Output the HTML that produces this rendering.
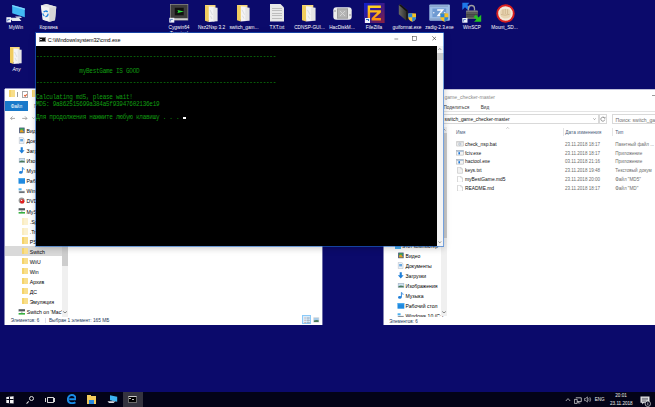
<!DOCTYPE html>
<html><head><meta charset="utf-8">
<style>
*{margin:0;padding:0;box-sizing:border-box}
html,body{width:655px;height:407px;overflow:hidden}
body{background:#0b0a6b;position:relative;font-family:"Liberation Sans",sans-serif;font-size:4.8px;color:#000}
.a{position:absolute}
.lbl{position:absolute;color:#fff;font-size:4.75px;white-space:nowrap;text-align:center;line-height:6px}
.t{position:absolute;white-space:nowrap;line-height:6px;font-size:4.8px}
.fold{position:absolute;background:#f3d36b}
.fold:after{content:"";position:absolute;left:25%;top:8%;right:4%;bottom:0;background:#f4f4f4;transform:skewY(-8deg)}
pre{margin:0}
</style></head><body>
<svg class="a" style="left:0;top:0" width="30" height="25" viewBox="0 0 30 25"><path d="M12.2,4.9 L24.8,8.6 V17.2 L12.2,13.2 Z" fill="#41b9f4"/><path d="M12.2,4.9 L24.8,8.6 V10 L12.2,6.3 Z" fill="#7fd4fb"/><path d="M15.2,16.4 L20.5,16.6 L22,17.9 L16.5,17.8 Z" fill="#dfe6ec"/><path d="M9.7,17.8 L19,17.8 L21.4,20.9 L12.2,20.9 Z" fill="#e4e8ec"/><rect x="6.4" y="17.2" width="4.6" height="5.2" fill="#f2f5fa"/><path d="M7.8,21.3 V19.4 H9.8" stroke="#2a5ab0" stroke-width="0.8" fill="none"/></svg>
<div class="lbl" style="left:-4.0px;top:25.0px;width:40px;">MyWin</div>
<svg class="a" style="left:36px;top:0" width="24" height="24" viewBox="0 0 24 24"><path d="M4.9,5.5 L10.4,4 L20.3,6.8 L19,20.3 L13.5,21.8 L6.8,19.7 Z" fill="#e0e0e0"/><path d="M4.9,5.5 L10.4,4 L20.3,6.8 L13.5,7.8 Z" fill="#e4e4e4"/><path d="M4.9,5.5 L13.5,7.8 V21.8 L6.8,19.7 Z" fill="#f2f2f2"/><path d="M13.5,7.8 L20.3,6.8 L19,20.3 L13.5,21.8 Z" fill="#d6d6d6"/><path d="M7.6,12.2 A2.4,2.4 0 0 1 11.6,12 M11.9,13.6 A2.4,2.4 0 0 1 9.4,16.6 M8.4,16 A2.4,2.4 0 0 1 7,13.4" stroke="#1c80dc" stroke-width="1.3" fill="none"/></svg>
<div class="lbl" style="left:28.5px;top:25.0px;width:40px;">Корзина</div>
<svg class="a" style="left:10px;top:47px;" width="12" height="17" viewBox="0 0 13 17" preserveAspectRatio="none"><path d="M0,0 H10.5 V15 H0 Z" fill="#f7d87c"/><path d="M0,0.2 L3.8,1.4 V17 L0,15.8 Z" fill="#f0cc5e"/><path d="M3.8,1.4 L9.5,1.8 V16.6 L3.8,17 Z" fill="#f4f4f4"/><path d="M8.3,2.4 L12.6,2.8 V16.2 L8.3,16.6 Z" fill="#e6e6e6"/><path d="M5,5 L7.5,10 M5.5,11 L7,14" stroke="#c8ccd4" stroke-width="0.6"/></svg>
<div class="lbl" style="left:-3.5px;top:67.2px;width:40px;font-style:italic">Any</div>
<svg class="a" style="left:165px;top:0" width="30" height="25" viewBox="0 0 30 25"><rect x="5" y="4" width="18.2" height="16.5" fill="#9a9a9a"/><rect x="5.6" y="4.6" width="17" height="13.8" fill="#3c3c3c"/><rect x="5.6" y="18.4" width="17" height="1.6" fill="#cfcfcf"/><rect x="9.3" y="7.3" width="9.8" height="8.5" rx="0.6" fill="#101010" stroke="#555" stroke-width="0.5"/><path d="M12.3,10 L19,11.4 L12.3,13 L13.3,11.4 Z" fill="#2ee040"/><rect x="4.3" y="17.8" width="5" height="4.8" fill="#eef2fa"/><path d="M5.6,21.5 V19.4 H7.8" stroke="#2a5ab0" stroke-width="0.7" fill="none"/></svg>
<div class="lbl" style="left:159.0px;top:25.2px;width:40px;">Cygwin64</div>
<div class="lbl" style="left:159.0px;top:30.999999999999996px;width:40px;">Terminal</div>
<svg class="a" style="left:205px;top:5px;" width="13" height="17" viewBox="0 0 13 17" preserveAspectRatio="none"><path d="M0,0 H10.5 V15 H0 Z" fill="#f7d87c"/><path d="M0,0.2 L3.8,1.4 V17 L0,15.8 Z" fill="#f0cc5e"/><path d="M3.8,1.4 L9.5,1.8 V16.6 L3.8,17 Z" fill="#f4f4f4"/><path d="M8.3,2.4 L12.6,2.8 V16.2 L8.3,16.6 Z" fill="#e6e6e6"/><path d="M5,5 L7.5,10 M5.5,11 L7,14" stroke="#c8ccd4" stroke-width="0.6"/></svg>
<div class="lbl" style="left:191.5px;top:25.2px;width:40px;">Nsz2Nsp 3.2</div>
<svg class="a" style="left:237px;top:5px;" width="13" height="16.5" viewBox="0 0 13 17" preserveAspectRatio="none"><path d="M0,0 H10.5 V15 H0 Z" fill="#f7d87c"/><path d="M0,0.2 L3.8,1.4 V17 L0,15.8 Z" fill="#f0cc5e"/><path d="M3.8,1.4 L9.5,1.8 V16.6 L3.8,17 Z" fill="#f4f4f4"/><path d="M8.3,2.4 L12.6,2.8 V16.2 L8.3,16.6 Z" fill="#e6e6e6"/><path d="M5,5 L7.5,10 M5.5,11 L7,14" stroke="#c8ccd4" stroke-width="0.6"/></svg>
<div class="lbl" style="left:224.0px;top:25.2px;width:40px;">switch_gam...</div>
<div class="a" style="left:270px;top:4px;width:14px;height:17.5px;background:#e8e8e8;clip-path:polygon(0 0,75% 0,100% 20%,100% 100%,0 100%)"></div>
<div class="a" style="left:272px;top:8px;width:10px;height:11px;background:repeating-linear-gradient(#bdbdbd 0 1px,transparent 1px 2.4px)"></div>
<div class="lbl" style="left:257.0px;top:25.2px;width:40px;">TXT.txt</div>
<svg class="a" style="left:302px;top:5px;" width="14" height="16.5" viewBox="0 0 13 17" preserveAspectRatio="none"><path d="M0,0 H10.5 V15 H0 Z" fill="#f7d87c"/><path d="M0,0.2 L3.8,1.4 V17 L0,15.8 Z" fill="#f0cc5e"/><path d="M3.8,1.4 L9.5,1.8 V16.6 L3.8,17 Z" fill="#f4f4f4"/><path d="M8.3,2.4 L12.6,2.8 V16.2 L8.3,16.6 Z" fill="#e6e6e6"/><path d="M5,5 L7.5,10 M5.5,11 L7,14" stroke="#c8ccd4" stroke-width="0.6"/></svg>
<div class="lbl" style="left:289.5px;top:25.2px;width:40px;">CDNSP-GUI...</div>
<svg class="a" style="left:332.5px;top:6.5px" width="19" height="13" viewBox="0 0 19 13"><rect x="0.3" y="0.3" width="18.4" height="12.4" rx="3" fill="#ececec"/><rect x="4" y="1.3" width="11" height="10.4" fill="#9c9c9c"/><rect x="5" y="2.3" width="9" height="8.4" fill="#b4b4b4"/><path d="M7,4 L12,9 M12,4 L7,9" stroke="#d8d8d8" stroke-width="0.9"/><circle cx="2" cy="4" r="0.7" fill="#777"/><circle cx="17" cy="8" r="0.7" fill="#777"/></svg>
<div class="lbl" style="left:322.0px;top:25.2px;width:40px;">HacDiskM...</div>
<svg class="a" style="left:364.3px;top:2.8px" width="20.6" height="20" viewBox="0 0 20.6 20"><defs><linearGradient id="fzb" x1="0" y1="0" x2="1" y2="1"><stop offset="0" stop-color="#1020d0"/><stop offset=".5" stop-color="#3a1a8a"/><stop offset="1" stop-color="#8a2040"/></linearGradient><linearGradient id="fzl" x1="0" y1="0" x2="0" y2="1"><stop offset="0" stop-color="#ffd820"/><stop offset="1" stop-color="#ff8a10"/></linearGradient></defs><rect width="20.6" height="20" fill="url(#fzb)"/><path d="M3.7,2.5 H16.9 V4.9 H6.1 V7.3 H16.9 V9.5 L10.8,15 H16.9 V17.5 H7.6 V15.2 L13.3,9.5 H6.1 V15.2 H3.7 Z" fill="url(#fzl)"/></svg>
<div class="a" style="left:364.6px;top:17.5px;width:5.2px;height:5.2px;background:#eef2fa"></div>
<div class="a" style="left:366px;top:18.8px;width:2.5px;height:2.5px;border-top:0.8px solid #2a6ac0;border-right:0.8px solid #2a6ac0"></div>
<div class="lbl" style="left:354.0px;top:25.2px;width:40px;">FileZilla</div>
<svg class="a" style="left:398px;top:3.5px" width="19" height="19" viewBox="0 0 19 19"><defs><linearGradient id="gdr" x1="0" x2="1"><stop offset="0" stop-color="#6a6a62"/><stop offset="1" stop-color="#262624"/></linearGradient></defs><path d="M0.8,1.1 L2.7,0.5 L9.8,6.6 V15.5 L8.2,16.5 L0.8,10.3 Z" fill="url(#gdr)"/><path d="M0.8,1.1 L2.7,0.5 L9.8,6.6 L8.2,7.3 Z" fill="#111"/><path d="M8.2,7.3 L9.8,6.6 V15.5 L8.2,16.5 Z" fill="#1a1a1a"/></svg>
<svg class="a" style="left:407.8px;top:13px" width="8.5" height="9" viewBox="0 0 8.5 9"><path d="M0.3,0.6 Q4.25,-0.2 8.2,0.6 V4.5 Q8,7.6 4.25,8.8 Q0.5,7.6 0.3,4.5 Z" fill="#f5c024"/><path d="M0.3,0.6 Q2.2,0.25 4.25,0.2 V4.3 H0.3 Z M4.25,4.3 H8.15 Q8,7.6 4.25,8.8 Z" fill="#2a86dc"/></svg>
<div class="lbl" style="left:387.0px;top:25.2px;width:40px;">guiformat.exe</div>
<svg class="a" style="left:429px;top:3.5px" width="21.5" height="17.5" viewBox="0 0 21.5 17.5"><rect x="0.3" y="0.5" width="20.6" height="16.3" rx="1" fill="#9cbde6"/><path d="M2,1.3 V3 M4,1.3 V3 M6,1.3 V3 M8,1.3 V3 M10,1.3 V3 M12,1.3 V3 M14,1.3 V3 M16,1.3 V3 M18,1.3 V3 M2,14.3 V16 M4,14.3 V16 M6,14.3 V16 M8,14.3 V16 M10,14.3 V16 M12,14.3 V16 M14,14.3 V16 M16,14.3 V16 M18,14.3 V16" stroke="#6a7ea0" stroke-width="0.7"/><rect x="3.4" y="4.5" width="13.8" height="8.6" fill="#6f9ad2"/><path d="M8.2,6 H13.6 L9.2,11.4 H13.8" stroke="#fff" stroke-width="1.5" fill="none"/><circle cx="4.8" cy="8.8" r="0.7" fill="#fff"/><circle cx="15.8" cy="8.8" r="0.7" fill="#fff"/></svg>
<svg class="a" style="left:440.4px;top:13.3px" width="8.8" height="9" viewBox="0 0 8.5 9"><path d="M0.3,0.6 Q4.25,-0.2 8.2,0.6 V4.5 Q8,7.6 4.25,8.8 Q0.5,7.6 0.3,4.5 Z" fill="#f5c024"/><path d="M0.3,0.6 Q2.2,0.25 4.25,0.2 V4.3 H0.3 Z M4.25,4.3 H8.15 Q8,7.6 4.25,8.8 Z" fill="#2a86dc"/></svg>
<div class="lbl" style="left:419.5px;top:24.7px;width:40px;">zadig-2.3.exe</div>
<svg class="a" style="left:458px;top:0" width="26" height="24" viewBox="0 0 26 24"><defs><linearGradient id="wsl" x1="0" x2="0" y1="0" y2="1"><stop offset="0" stop-color="#8a8a8a"/><stop offset=".5" stop-color="#4a4a4a"/><stop offset="1" stop-color="#6a6a6a"/></linearGradient></defs><path d="M4.3,2.8 H11.4 L9.2,5 L12,7.8 L9.8,10 L7,7.2 L4.3,9.9 Z" fill="#1e78e8"/><path d="M10.5,10.6 V8.5 A3,3 0 0 1 16.5,8.5 V10.6" stroke="#a0a0a0" stroke-width="1.3" fill="none"/><rect x="8" y="10.4" width="11.9" height="8.5" rx="0.8" fill="url(#wsl)"/><path d="M8.5,12.5 H19.5 M8.5,14.5 H19.5 M8.5,16.5 H19.5" stroke="#3a3a3a" stroke-width="0.4"/><path d="M23.2,21.8 H16 L18.3,19.6 L15.6,16.9 L17.8,14.7 L20.5,17.4 L23.2,14.7 Z" fill="#22c022"/><rect x="4.3" y="18" width="5.2" height="4.7" fill="#eef2fa"/><path d="M5.6,21.6 V19.5 H7.8" stroke="#2a5ab0" stroke-width="0.7" fill="none"/></svg>
<div class="lbl" style="left:452.0px;top:24.7px;width:40px;">WinSCP</div>
<svg class="a" style="left:495.5px;top:3.5px" width="19" height="19" viewBox="0 0 19 19"><circle cx="9.5" cy="9.5" r="8.3" fill="#f2e8d8" stroke="#d82020" stroke-width="1.9"/><path d="M4.2,8 Q4.5,5 7,5.2 Q9,4.2 11,5 Q13.5,4.8 14.5,7 Q15.2,10.5 14,13 Q11.5,15 8,14.5 Q5,14 4.2,11 Z" fill="#e8d4b0"/><path d="M7,5.5 V10 M9.3,5 V10 M11.6,5.3 V10 M5,10.5 Q9,12 13.5,10.3" stroke="#b89a70" stroke-width="0.5" fill="none"/></svg>
<div class="lbl" style="left:484.5px;top:24.7px;width:40px;">Mount_SD...</div>
<div class="a" style="left:5px;top:89px;width:317px;height:236px;background:#fff"></div>
<div class="a" style="left:5px;top:88px;width:317px;height:1px;background:rgba(255,255,255,.55)"></div>
<div class="a" style="left:4px;top:89px;width:1px;height:236px;background:rgba(255,255,255,.5)"></div>
<div class="a" style="left:322px;top:89px;width:1px;height:236px;background:rgba(255,255,255,.4)"></div>
<div class="a" style="left:9px;top:90.4px;width:5.6px;height:6.6px;background:linear-gradient(90deg,#f5d36a 0 30%,#f8de8a 30%);border-radius:.3px"></div>
<div class="a" style="left:17.3px;top:92px;width:0.6px;height:5px;background:#9a9a9a"></div>
<div class="a" style="left:22.4px;top:91.4px;width:5.4px;height:6.7px;background:#fff;border:0.6px solid #a8a8a8"></div>
<div class="a" style="left:23.5px;top:93.5px;width:3px;height:2px;border-left:0.8px solid #e05a2a;border-bottom:0.8px solid #e05a2a;transform:rotate(-45deg)"></div>
<div class="a" style="left:31.6px;top:90.4px;width:5.6px;height:6.6px;background:linear-gradient(90deg,#f5d36a 0 30%,#f8de8a 30%);border-radius:.3px"></div>
<div class="a" style="left:4.5px;top:101px;width:23.3px;height:9.6px;background:#1979ca"></div>
<div class="t" style="left:10.7px;top:103.8px;color:#fff;font-size:4.7px">Файл</div>
<div class="t" style="left:34px;top:103.8px;color:#555;font-size:4.7px">Г</div>
<svg class="a" style="left:9.6px;top:115.6px" width="5.6" height="4.8" viewBox="0 0 5.6 4.8"><path d="M5.4,2.4 H0.6 M2.6,0.4 L0.6,2.4 L2.6,4.4" stroke="#8a8a8a" stroke-width="0.7" fill="none"/></svg>
<svg class="a" style="left:22px;top:115.6px" width="5.6" height="4.8" viewBox="0 0 5.6 4.8"><path d="M0.2,2.4 H5 M3,0.4 L5,2.4 L3,4.4" stroke="#8a8a8a" stroke-width="0.7" fill="none"/></svg>
<svg class="a" style="left:32.4px;top:116.94999999999999px" width="3.2" height="2.1" viewBox="0 0 3.2 2.1"><path d="M0.4,0.4 L1.6,1.7000000000000002 L2.8,0.4" stroke="#8a8a8a" stroke-width="0.6" fill="none"/></svg>
<div class="a" style="left:5px;top:246.2px;width:56.5px;height:9.4px;background:#d9d9d9"></div>
<svg class="a" style="left:17.7px;top:126.80000000000001px" width="7.5" height="7" viewBox="0 0 7.5 7"><rect x="1.2" y="0.6" width="5.4" height="5.6" fill="#3a4868"/><rect x="2" y="1.4" width="3.8" height="4" fill="#2a7ad0"/><path d="M2,1.4 H5.8 V3 H2 Z" fill="#40a848"/><path d="M2,3.6 L4,2.6 L5.8,4.4 V5.4 H2 Z" fill="#e0a020"/></svg>
<div class="t" style="left:26.5px;top:128.10000000000002px;font-size:5.2px">Видео</div>
<svg class="a" style="left:17.7px;top:136.8px" width="7.5" height="7" viewBox="0 0 7.5 7"><path d="M1.3,0.3 H4.6 L6,1.7 V6.6 H1.3 Z" fill="#eef2f6" stroke="#a8b4c4" stroke-width="0.5"/><rect x="2.2" y="2" width="2.8" height="2.4" fill="#6aa8e0"/></svg>
<div class="t" style="left:26.5px;top:138.10000000000002px;font-size:5.2px">Документы</div>
<svg class="a" style="left:17.7px;top:146.7px" width="7.5" height="7" viewBox="0 0 7.5 7"><path d="M2.7,0.2 H4.8 V3.2 H6.6 L3.75,6.6 L0.9,3.2 H2.7 Z" fill="#1f7fd8"/></svg>
<div class="t" style="left:26.5px;top:148.0px;font-size:5.2px">Загрузки</div>
<svg class="a" style="left:17.7px;top:156.7px" width="7.5" height="7" viewBox="0 0 7.5 7"><rect x="0.9" y="1.2" width="6.2" height="4.6" fill="#9aa8b8"/><rect x="1.4" y="1.7" width="5.2" height="3.6" fill="#cfe4f6"/><path d="M1.4,4.2 Q3.5,2.8 6.6,4 V5.3 H1.4 Z" fill="#4a7a58"/></svg>
<div class="t" style="left:26.5px;top:158.0px;font-size:5.2px">Изображения</div>
<svg class="a" style="left:17.7px;top:166.7px" width="7.5" height="7" viewBox="0 0 7.5 7"><path d="M4.4,0.4 V5.2" stroke="#1f7fd8" stroke-width="0.9"/><path d="M4.4,0.4 Q6.2,1.2 6.2,3" stroke="#1f7fd8" stroke-width="0.7" fill="none"/><ellipse cx="2.8" cy="5.4" rx="1.8" ry="1.3" fill="#1f7fd8"/></svg>
<div class="t" style="left:26.5px;top:168.0px;font-size:5.2px">Музыка</div>
<svg class="a" style="left:17.7px;top:176.7px" width="7.5" height="7" viewBox="0 0 7.5 7"><rect x="0.5" y="1.2" width="6.8" height="5.5" fill="#1f8ae0"/><rect x="0.5" y="1.2" width="6.8" height="1" fill="#52aef0"/></svg>
<div class="t" style="left:26.5px;top:178.0px;font-size:5.2px">Рабочий стол</div>
<svg class="a" style="left:17.7px;top:186.7px" width="7.5" height="7" viewBox="0 0 7.5 7"><rect x="0.6" y="1.3" width="3" height="2" fill="#4ab0f0"/><rect x="0.6" y="3.8" width="6.4" height="2.4" fill="#c8ccd0"/><rect x="1.2" y="4.6" width="5.2" height="1" fill="#303840"/></svg>
<div class="t" style="left:26.5px;top:188.0px;font-size:5.2px">Windows 10 (C:)</div>
<svg class="a" style="left:17.7px;top:197.0px" width="7.5" height="7" viewBox="0 0 7.5 7"><circle cx="3.6" cy="3.4" r="3" fill="#9a9a9a"/><circle cx="4.2" cy="4.4" r="2.2" fill="#e02020"/><circle cx="3.6" cy="3.4" r="0.7" fill="#eee"/></svg>
<div class="t" style="left:26.5px;top:198.3px;font-size:5.2px">DVD</div>
<svg class="a" style="left:17.7px;top:207.2px" width="7.5" height="7" viewBox="0 0 7.5 7"><rect x="0.6" y="1.2" width="6.6" height="2.4" fill="#50585e"/><rect x="0.6" y="3.2" width="6.6" height="0.5" fill="#e8e8e8"/><path d="M3.9,3.7 V5" stroke="#50585e" stroke-width="0.6"/><rect x="0.6" y="5" width="6.6" height="1.6" fill="#36b040"/></svg>
<div class="t" style="left:26.5px;top:208.5px;font-size:5.2px">MySwitch</div>
<div class="a" style="left:22px;top:218.0px;width:5.6px;height:6.6px;background:linear-gradient(90deg,#faecc0 0 30%,#fbf1d0 30%);border-radius:.3px"></div>
<div class="t" style="left:29.7px;top:219.20000000000002px;font-size:5.2px">.Spotify</div>
<div class="a" style="left:22px;top:228.1px;width:5.6px;height:6.6px;background:linear-gradient(90deg,#faecc0 0 30%,#fbf1d0 30%);border-radius:.3px"></div>
<div class="t" style="left:29.7px;top:229.3px;font-size:5.2px">.Trash</div>
<div class="a" style="left:22px;top:237.29999999999998px;width:5.6px;height:6.6px;background:linear-gradient(90deg,#f5d36a 0 30%,#f8de8a 30%);border-radius:.3px"></div>
<div class="t" style="left:29.7px;top:238.5px;font-size:5.2px">PS3</div>
<div class="a" style="left:22px;top:247.9px;width:5.6px;height:6.6px;background:linear-gradient(90deg,#f5d36a 0 30%,#f8de8a 30%);border-radius:.3px"></div>
<div class="t" style="left:29.7px;top:249.10000000000002px;font-size:5.2px">Switch</div>
<div class="a" style="left:22px;top:257.7px;width:5.6px;height:6.6px;background:linear-gradient(90deg,#f5d36a 0 30%,#f8de8a 30%);border-radius:.3px"></div>
<div class="t" style="left:29.7px;top:258.90000000000003px;font-size:5.2px">WiiU</div>
<div class="a" style="left:22px;top:267.7px;width:5.6px;height:6.6px;background:linear-gradient(90deg,#f5d36a 0 30%,#f8de8a 30%);border-radius:.3px"></div>
<div class="t" style="left:29.7px;top:268.90000000000003px;font-size:5.2px">Win</div>
<div class="a" style="left:22px;top:277.7px;width:5.6px;height:6.6px;background:linear-gradient(90deg,#f5d36a 0 30%,#f8de8a 30%);border-radius:.3px"></div>
<div class="t" style="left:29.7px;top:278.90000000000003px;font-size:5.2px">Архив</div>
<div class="a" style="left:22px;top:287.7px;width:5.6px;height:6.6px;background:linear-gradient(90deg,#f5d36a 0 30%,#f8de8a 30%);border-radius:.3px"></div>
<div class="t" style="left:29.7px;top:288.90000000000003px;font-size:5.2px">ДС</div>
<div class="a" style="left:22px;top:297.7px;width:5.6px;height:6.6px;background:linear-gradient(90deg,#f5d36a 0 30%,#f8de8a 30%);border-radius:.3px"></div>
<div class="t" style="left:29.7px;top:298.90000000000003px;font-size:5.2px">Эмуляция</div>
<svg class="a" style="left:17.7px;top:308.0px" width="7.5" height="7" viewBox="0 0 7.5 7"><rect x="0.6" y="1.2" width="6.6" height="2.4" fill="#50585e"/><rect x="0.6" y="3.2" width="6.6" height="0.5" fill="#e8e8e8"/><path d="M3.9,3.7 V5" stroke="#50585e" stroke-width="0.6"/><rect x="0.6" y="5" width="6.6" height="1.6" fill="#36b040"/></svg>
<div class="t" style="left:26.8px;top:309.3px;font-size:5.15px">Switch on 'Mac'</div>
<div class="a" style="left:61.5px;top:89px;width:6.3px;height:228px;background:#f0f0f0"></div>
<div class="a" style="left:61.5px;top:246px;width:6.3px;height:20px;background:#cdcdcd"></div>
<svg class="a" style="left:62.8px;top:310.90000000000003px" width="4.0" height="2.6" viewBox="0 0 4.0 2.6"><path d="M0.4,0.4 L2.0,2.2 L3.6,0.4" stroke="#505050" stroke-width="0.75" fill="none"/></svg>
<div class="t" style="left:10.8px;top:317.8px;color:#1e395b;font-size:4.55px">Элементов: 6</div>
<div class="a" style="left:45px;top:317.5px;width:0.5px;height:5px;background:#dde"></div>
<div class="t" style="left:48.9px;top:317.8px;color:#1e395b;font-size:4.8px">Выбран 1 элемент: 165 МБ</div>
<div class="a" style="left:302.3px;top:315.3px;width:8.8px;height:9.2px;background:#d8ecfc;border:0.8px solid #8ccaf8"></div>
<svg class="a" style="left:303.5px;top:316.5px" width="6.5" height="7" viewBox="0 0 6.5 7"><path d="M0.5,1 H1.6 M0.5,3.3 H1.6 M0.5,5.6 H1.6" stroke="#c89080" stroke-width="1.1"/><path d="M2.5,1 H6 M2.5,3.3 H6 M2.5,5.6 H6" stroke="#8898a8" stroke-width="0.6"/><path d="M4,0.2 V6.6" stroke="#8898a8" stroke-width="0.4"/></svg>
<svg class="a" style="left:313px;top:316.5px" width="6.5" height="6" viewBox="0 0 6.5 6"><rect x="0.3" y="0.3" width="5.9" height="5.2" fill="#d8d8d8"/><rect x="0.9" y="0.9" width="4.7" height="4" fill="#a8cce8"/><path d="M0.9,3.6 Q3,2.4 5.6,3.2 V4.9 H0.9 Z" fill="#4a7a58"/></svg>
<div class="a" style="left:384px;top:90px;width:280px;height:235px;background:#fff"></div>
<div class="a" style="left:384px;top:89px;width:280px;height:1px;background:rgba(255,255,255,.75)"></div>
<div class="a" style="left:383px;top:90px;width:1px;height:235px;background:rgba(255,255,255,.5)"></div>
<div class="t" style="left:444.4px;top:93.8px;color:#8a8a8a;font-size:5.1px">game_checker-master</div>
<div class="a" style="left:651.6px;top:94.6px;width:3.4px;height:0.45px;background:#9a9a9a"></div>
<div class="t" style="left:443.4px;top:104.8px;font-size:4.7px;color:#333">Поделиться</div>
<div class="t" style="left:480.7px;top:104.8px;font-size:4.7px;color:#333">Вид</div>
<div class="a" style="left:384.5px;top:110.9px;width:272px;height:0.6px;background:#e4e4e4"></div>
<div class="a" style="left:430px;top:114.2px;width:168.7px;height:9.6px;background:#fff;border:0.6px solid #d9d9d9"></div>
<div class="t" style="left:444.6px;top:116.8px;font-size:4.9px;color:#111">switch_game_checker-master</div>
<svg class="a" style="left:593.0px;top:118.0px" width="3.0" height="2.0" viewBox="0 0 3.0 2.0"><path d="M0.4,0.4 L1.5,1.6 L2.6,0.4" stroke="#666" stroke-width="0.55" fill="none"/></svg>
<div class="a" style="left:598.7px;top:114.2px;width:8.1px;height:9.6px;background:#fff;border:0.6px solid #d9d9d9"></div>
<svg class="a" style="left:600px;top:116px" width="6" height="6" viewBox="0 0 6 6"><path d="M4.6,2.2 A2,2 0 1 0 4.8,3.6" stroke="#555" stroke-width="0.6" fill="none"/><path d="M3.6,1.3 L4.9,2.4 L5.2,0.9" stroke="#555" stroke-width="0.5" fill="none"/></svg>
<div class="a" style="left:612.4px;top:114.2px;width:50px;height:9.6px;background:#fff;border:0.6px solid #d9d9d9"></div>
<div class="t" style="left:615.6px;top:116.8px;color:#6d6d6d;font-size:5.1px">Поиск: switch_game</div>
<div class="t" style="left:456px;top:130.0px;color:#4c607a;font-size:4.8px">Имя</div>
<svg class="a" style="left:506.3px;top:126.54999999999998px" width="3.4000000000000004" height="2.1" viewBox="0 0 3.4000000000000004 2.1"><path d="M0.4,1.7000000000000002 L1.7000000000000002,0.4 L3.0,1.7000000000000002" stroke="#9a9a9a" stroke-width="0.55" fill="none"/></svg>
<div class="a" style="left:562.6px;top:128px;width:0.5px;height:8px;background:#e5e5e5"></div>
<div class="t" style="left:565.2px;top:130.0px;color:#4c607a;font-size:4.8px">Дата изменения</div>
<div class="a" style="left:612.3px;top:128px;width:0.5px;height:8px;background:#e5e5e5"></div>
<div class="t" style="left:615.3px;top:130.0px;color:#4c607a;font-size:4.8px">Тип</div>
<svg class="a" style="left:456.3px;top:141.4px" width="8" height="5.5" viewBox="0 0 8 5.5"><rect x="0.4" y="0.4" width="7.2" height="4.7" rx="0.5" fill="#ececec" stroke="#b0b0b0" stroke-width="0.5"/><rect x="0.6" y="0.6" width="6.8" height="0.8" fill="#c8c8c8"/><circle cx="3.8" cy="3.1" r="1.1" fill="none" stroke="#8aa0b8" stroke-width="0.5"/></svg>
<div class="t" style="left:465px;top:141.8px;font-size:4.9px;color:#111">check_nsp.bat</div>
<div class="t" style="left:565px;top:141.8px;font-size:4.55px;color:#6d6d6d">23.11.2018 18:17</div>
<div class="t" style="left:615.3px;top:141.8px;font-size:4.6px;color:#6d6d6d">Пакетный файл ...</div>
<svg class="a" style="left:456.3px;top:150.20000000000002px" width="8" height="5.5" viewBox="0 0 8 5.5"><rect x="0.4" y="0.4" width="7.2" height="4.7" fill="#f4f4f4" stroke="#a8a8a8" stroke-width="0.5"/><rect x="0.6" y="0.6" width="6.8" height="1" fill="#8aa8c8"/><rect x="2.4" y="2.2" width="1.6" height="2.2" fill="#1f78d8"/></svg>
<div class="t" style="left:465px;top:150.60000000000002px;font-size:4.9px;color:#111">fciv.exe</div>
<div class="t" style="left:565px;top:150.60000000000002px;font-size:4.55px;color:#6d6d6d">23.11.2018 18:17</div>
<div class="t" style="left:615.3px;top:150.60000000000002px;font-size:4.6px;color:#6d6d6d">Приложение</div>
<svg class="a" style="left:456.3px;top:159.0px" width="8" height="5.5" viewBox="0 0 8 5.5"><rect x="0.4" y="0.4" width="7.2" height="4.7" fill="#f4f4f4" stroke="#a8a8a8" stroke-width="0.5"/><rect x="0.6" y="0.6" width="6.8" height="1" fill="#8aa8c8"/><rect x="2.4" y="2.2" width="1.6" height="2.2" fill="#1f78d8"/></svg>
<div class="t" style="left:465px;top:159.4px;font-size:4.9px;color:#111">hactool.exe</div>
<div class="t" style="left:565px;top:159.4px;font-size:4.55px;color:#6d6d6d">03.11.2018 21:16</div>
<div class="t" style="left:615.3px;top:159.4px;font-size:4.6px;color:#6d6d6d">Приложение</div>
<svg class="a" style="left:457px;top:167.0px" width="6" height="6.6" viewBox="0 0 6 6.6"><path d="M0.5,0.3 H3.8 L5.5,2 V6.3 H0.5 Z" fill="#f2f2f2" stroke="#b4b4b4" stroke-width="0.5"/><path d="M3.8,0.3 V2 H5.5" fill="none" stroke="#b4b4b4" stroke-width="0.4"/></svg>
<div class="t" style="left:465px;top:168.10000000000002px;font-size:4.9px;color:#111">keys.txt</div>
<div class="t" style="left:565px;top:168.10000000000002px;font-size:4.55px;color:#6d6d6d">23.11.2018 19:48</div>
<div class="t" style="left:615.3px;top:168.10000000000002px;font-size:4.6px;color:#6d6d6d">Текстовый докум</div>
<svg class="a" style="left:457px;top:175.7px" width="6" height="6.6" viewBox="0 0 6 6.6"><path d="M0.5,0.3 H3.8 L5.5,2 V6.3 H0.5 Z" fill="#fff" stroke="#b4b4b4" stroke-width="0.5"/><path d="M3.8,0.3 V2 H5.5" fill="none" stroke="#b4b4b4" stroke-width="0.4"/></svg>
<div class="t" style="left:465px;top:176.8px;font-size:4.9px;color:#111">myBestGame.md5</div>
<div class="t" style="left:565px;top:176.8px;font-size:4.55px;color:#6d6d6d">23.11.2018 20:00</div>
<div class="t" style="left:615.3px;top:176.8px;font-size:4.6px;color:#6d6d6d">Файл "MD5"</div>
<svg class="a" style="left:457px;top:184.5px" width="6" height="6.6" viewBox="0 0 6 6.6"><path d="M0.5,0.3 H3.8 L5.5,2 V6.3 H0.5 Z" fill="#fff" stroke="#b4b4b4" stroke-width="0.5"/><path d="M3.8,0.3 V2 H5.5" fill="none" stroke="#b4b4b4" stroke-width="0.4"/></svg>
<div class="t" style="left:465px;top:185.60000000000002px;font-size:4.9px;color:#111">README.md</div>
<div class="t" style="left:565px;top:185.60000000000002px;font-size:4.55px;color:#6d6d6d">23.11.2018 18:17</div>
<div class="t" style="left:615.3px;top:185.60000000000002px;font-size:4.6px;color:#6d6d6d">Файл "MD"</div>
<div class="t" style="left:402px;top:244.4px;font-size:4.8px">Этот компьютер</div>
<div class="a" style="left:394.5px;top:244.5px;width:6px;height:4px;background:#4ab0f0"></div>
<svg class="a" style="left:397.0px;top:251.8px" width="7.5" height="7" viewBox="0 0 7.5 7"><rect x="1.2" y="0.6" width="5.4" height="5.6" fill="#3a4868"/><rect x="2" y="1.4" width="3.8" height="4" fill="#2a7ad0"/><path d="M2,1.4 H5.8 V3 H2 Z" fill="#40a848"/><path d="M2,3.6 L4,2.6 L5.8,4.4 V5.4 H2 Z" fill="#e0a020"/></svg>
<div class="t" style="left:405.5px;top:253.10000000000002px;font-size:5.1px">Видео</div>
<svg class="a" style="left:397.0px;top:261.8px" width="7.5" height="7" viewBox="0 0 7.5 7"><path d="M1.3,0.3 H4.6 L6,1.7 V6.6 H1.3 Z" fill="#eef2f6" stroke="#a8b4c4" stroke-width="0.5"/><rect x="2.2" y="2" width="2.8" height="2.4" fill="#6aa8e0"/></svg>
<div class="t" style="left:405.5px;top:263.1px;font-size:5.1px">Документы</div>
<svg class="a" style="left:397.0px;top:271.8px" width="7.5" height="7" viewBox="0 0 7.5 7"><path d="M2.7,0.2 H4.8 V3.2 H6.6 L3.75,6.6 L0.9,3.2 H2.7 Z" fill="#1f7fd8"/></svg>
<div class="t" style="left:405.5px;top:273.1px;font-size:5.1px">Загрузки</div>
<svg class="a" style="left:397.0px;top:281.6px" width="7.5" height="7" viewBox="0 0 7.5 7"><rect x="0.9" y="1.2" width="6.2" height="4.6" fill="#9aa8b8"/><rect x="1.4" y="1.7" width="5.2" height="3.6" fill="#cfe4f6"/><path d="M1.4,4.2 Q3.5,2.8 6.6,4 V5.3 H1.4 Z" fill="#4a7a58"/></svg>
<div class="t" style="left:405.5px;top:282.90000000000003px;font-size:5.1px">Изображения</div>
<svg class="a" style="left:397.0px;top:291.7px" width="7.5" height="7" viewBox="0 0 7.5 7"><path d="M4.4,0.4 V5.2" stroke="#1f7fd8" stroke-width="0.9"/><path d="M4.4,0.4 Q6.2,1.2 6.2,3" stroke="#1f7fd8" stroke-width="0.7" fill="none"/><ellipse cx="2.8" cy="5.4" rx="1.8" ry="1.3" fill="#1f7fd8"/></svg>
<div class="t" style="left:405.5px;top:293.0px;font-size:5.1px">Музыка</div>
<svg class="a" style="left:397.0px;top:301.5px" width="7.5" height="7" viewBox="0 0 7.5 7"><rect x="0.5" y="1.2" width="6.8" height="5.5" fill="#1f8ae0"/><rect x="0.5" y="1.2" width="6.8" height="1" fill="#52aef0"/></svg>
<div class="t" style="left:405.5px;top:302.8px;font-size:5.1px">Рабочий стол</div>
<svg class="a" style="left:397.0px;top:312.1px" width="7.5" height="7" viewBox="0 0 7.5 7"><rect x="0.6" y="1.3" width="3" height="2" fill="#4ab0f0"/><rect x="0.6" y="3.8" width="6.4" height="2.4" fill="#c8ccd0"/><rect x="1.2" y="4.6" width="5.2" height="1" fill="#303840"/></svg>
<div class="t" style="left:405.5px;top:313.40000000000003px;font-size:5.1px">Windows 10 (C:)</div>
<div class="a" style="left:384.5px;top:316.6px;width:60px;height:8px;background:#fff"></div>
<div class="a" style="left:441px;top:126.5px;width:5.8px;height:189.8px;background:#f0f0f0"></div>
<div class="a" style="left:441px;top:133px;width:5.8px;height:105px;background:#cdcdcd"></div>
<svg class="a" style="left:443.1px;top:129.35px" width="2.8" height="1.9000000000000001" viewBox="0 0 2.8 1.9000000000000001"><path d="M0.4,1.5 L1.4,0.4 L2.4,1.5" stroke="#606060" stroke-width="0.6" fill="none"/></svg>
<svg class="a" style="left:441.8px;top:310.70000000000005px" width="4.0" height="2.6" viewBox="0 0 4.0 2.6"><path d="M0.4,0.4 L2.0,2.2 L3.6,0.4" stroke="#505050" stroke-width="0.75" fill="none"/></svg>
<div class="t" style="left:389.3px;top:318.6px;color:#1e395b;font-size:4.55px">Элементов: 6</div>
<div class="a" style="left:36px;top:33px;width:407.8px;height:213px;background:#fff;box-shadow:0 2px 7px rgba(0,0,0,.22)"></div>
<div class="a" style="left:38.8px;top:36.5px;width:7.2px;height:5.2px;background:#111;border:0.5px solid #888"></div>
<div class="a" style="left:40px;top:38.8px;width:2.2px;height:0.6px;background:#ccc"></div>
<div class="t" style="left:47.8px;top:37.0px;font-size:5.4px;letter-spacing:-0.1px;color:#000">C:\Windows\system32\cmd.exe</div>
<svg class="a" style="left:394px;top:38px" width="5" height="2" viewBox="0 0 5 2"><path d="M0.4,1 H4.2" stroke="#444" stroke-width="0.55"/></svg>
<svg class="a" style="left:412.2px;top:36.1px" width="5.2" height="5" viewBox="0 0 5.2 5"><rect x="0.5" y="0.5" width="4.2" height="4" stroke="#444" stroke-width="0.55" fill="none"/></svg>
<svg class="a" style="left:431.6px;top:36.3px" width="4.8" height="4.8" viewBox="0 0 4.8 4.8"><path d="M0.3,0.3 L4.5,4.5 M4.5,0.3 L0.3,4.5" stroke="#333" stroke-width="0.6"/></svg>
<div class="a" style="left:36px;top:45.5px;width:401px;height:200.5px;background:#000"></div>
<div class="a" style="left:437px;top:45.5px;width:6.8px;height:200.5px;background:#f4f4f4"></div>
<div class="a" style="left:437px;top:53px;width:6.8px;height:7px;background:#cdcdcd"></div>
<svg class="a" style="left:438.40000000000003px;top:48.45px" width="3.5999999999999996" height="2.3" viewBox="0 0 3.5999999999999996 2.3"><path d="M0.4,1.9 L1.7999999999999998,0.4 L3.1999999999999997,1.9" stroke="#555" stroke-width="0.6" fill="none"/></svg>
<svg class="a" style="left:438.40000000000003px;top:241.04999999999998px" width="3.5999999999999996" height="2.3" viewBox="0 0 3.5999999999999996 2.3"><path d="M0.4,0.4 L1.7999999999999998,1.9 L3.1999999999999997,0.4" stroke="#555" stroke-width="0.6" fill="none"/></svg>
<div class="a" style="left:35.2px;top:32.2px;width:409.3px;height:214.6px;border:0.9px solid rgba(30,105,205,.6)"></div>
<pre class="a" style="left:36px;top:54.0px;font:6px/6.6px 'Liberation Mono',monospace;letter-spacing:-0.267px;color:#109c10;transform:scaleY(1.12);transform-origin:0 70%">------------------------------------------------------------------------</pre>
<pre class="a" style="left:36px;top:68.6px;font:6px/6.6px 'Liberation Mono',monospace;letter-spacing:-0.267px;color:#109c10;transform:scaleY(1.12);transform-origin:0 70%">             myBestGame IS GOOD</pre>
<pre class="a" style="left:36px;top:80.4px;font:6px/6.6px 'Liberation Mono',monospace;letter-spacing:-0.267px;color:#109c10;transform:scaleY(1.12);transform-origin:0 70%">------------------------------------------------------------------------</pre>
<pre class="a" style="left:36px;top:94.49999999999999px;font:6px/6.6px 'Liberation Mono',monospace;letter-spacing:-0.267px;color:#109c10;transform:scaleY(1.12);transform-origin:0 70%">Calculating md5, please wait!</pre>
<pre class="a" style="left:36px;top:101.99999999999999px;font:6px/6.6px 'Liberation Mono',monospace;letter-spacing:-0.267px;color:#109c10;transform:scaleY(1.12);transform-origin:0 70%">MD5: 9a862515699a384a5f93947602136e19</pre>
<pre class="a" style="left:36px;top:114.5px;font:6px/6.6px 'Liberation Mono',monospace;letter-spacing:-0.267px;color:#109c10;transform:scaleY(1.12);transform-origin:0 70%">Для продолжения нажмите любую клавишу . . .</pre>
<div class="a" style="left:182.7px;top:117.3px;width:3.3px;height:1.6px;background:#fff"></div>
<div class="a" style="left:0px;top:391.5px;width:655px;height:15.5px;background:#030317"></div>
<div class="a" style="left:6.3px;top:396.3px;width:7.3px;height:7.3px;background:linear-gradient(90deg,transparent 3.3px,#030317 3.3px 3.9px,transparent 3.9px),linear-gradient(transparent 3.3px,#030317 3.3px 3.9px,transparent 3.9px),#f4f4f4;clip-path:polygon(0 8%,100% 0,100% 100%,0 92%)"></div>
<div class="a" style="left:28.8px;top:395.6px;width:5.2px;height:5.2px;border:0.75px solid #e0e0e0;border-radius:50%"></div>
<div class="a" style="left:26.2px;top:402.3px;width:3.2px;height:0.75px;background:#e0e0e0;transform:rotate(-45deg)"></div>
<div class="a" style="left:46.5px;top:397px;width:7px;height:6px;border:0.75px solid #d8d8d8;border-radius:.8px"></div>
<div class="a" style="left:45.2px;top:398.2px;width:1.3px;height:3.6px;border:0.6px solid #d8d8d8;border-right:none"></div>
<div class="a" style="left:53.5px;top:398.2px;width:1.3px;height:3.6px;border:0.6px solid #d8d8d8;border-left:none"></div>
<svg class="a" style="left:66.8px;top:394.3px" width="9.5" height="10" viewBox="0 0 9.5 10"><path d="M2.2,5.3 H8.6 C8.7,2.6 7.2,1 4.8,1 C2.3,1 0.9,3 0.9,5.3 C0.9,7.8 2.6,9.2 5,9.2 C6.5,9.2 7.6,8.8 8.4,8.2" stroke="#1a8ce6" stroke-width="1.9" fill="none"/></svg>
<div class="a" style="left:86.8px;top:395.3px;width:4px;height:1.5px;background:#f2cb5c"></div>
<div class="a" style="left:86.8px;top:396.3px;width:9.7px;height:7.4px;background:#f2cb5c"></div>
<div class="a" style="left:88.8px;top:400.3px;width:5.7px;height:3.4px;background:#2a8ae0"></div>
<svg class="a" style="left:106px;top:394px" width="13" height="11" viewBox="0 0 13 11"><path d="M4,1.3 L11.2,2.8 V7.7 L4,6.2 Z" fill="#3cb4f2"/><path d="M1.5,7.2 L7,7.2 L8.5,9 L3,9 Z" fill="#d8dde4"/><path d="M6,6.6 L9,7.2 L9.6,7.9 L6.6,7.5 Z" fill="#c8ccd4"/></svg>
<div class="a" style="left:122.5px;top:391.5px;width:20.5px;height:15.5px;background:#34333f"></div>
<div class="a" style="left:127.8px;top:395.8px;width:9.3px;height:7.2px;background:#000;border:0.5px solid #6a6a6a;border-top:1.1px solid #c8c8c8"></div>
<div class="a" style="left:129px;top:398.3px;width:2.4px;height:0.5px;background:#bbb"></div>
<div class="a" style="left:132.2px;top:399px;width:1.6px;height:0.5px;background:#bbb"></div>
<svg class="a" style="left:565px;top:396.5px" width="6" height="5" viewBox="0 0 6 5"><path d="M0.8,4 L3,1.6 L5.2,4" stroke="#e6e6e6" stroke-width="0.7" fill="none"/></svg>
<svg class="a" style="left:573.5px;top:396.5px" width="8" height="7" viewBox="0 0 8 7"><path d="M1.8,0.8 H7.3 V4.6 H1.8" stroke="#e6e6e6" stroke-width="0.75" fill="none"/><path d="M0.4,2.4 H3.2 V6.4 H0.4 Z" stroke="#e6e6e6" stroke-width="0.7" fill="#030317"/><path d="M4.3,4.6 V6 H6.3" stroke="#e6e6e6" stroke-width="0.6" fill="none"/></svg>
<svg class="a" style="left:583.5px;top:396.3px" width="8" height="7" viewBox="0 0 8 7"><path d="M0.6,2.4 H1.8 L3.4,0.9 V6.1 L1.8,4.6 H0.6 Z" stroke="#e6e6e6" stroke-width="0.6" fill="none"/><path d="M4.6,2.3 Q5.4,3.5 4.6,4.7 M5.8,1.2 Q7.4,3.5 5.8,5.8" stroke="#e6e6e6" stroke-width="0.6" fill="none"/></svg>
<div class="t" style="left:594.7px;top:397.3px;color:#eee;font-size:4.6px">ENG</div>
<div class="t" style="left:615.3px;top:393.40000000000003px;color:#eee;font-size:4.6px">20:01</div>
<div class="t" style="left:610px;top:401.1px;color:#eee;font-size:4.6px">23.11.2018</div>
<svg class="a" style="left:639.5px;top:396px" width="11" height="11" viewBox="0 0 11 11"><path d="M0.5,0.5 H9.5 V6.8 H3.8 L2.2,8.4 V6.8 H0.5 Z" fill="#e6e6e6"/><path d="M1.8,2.3 H8 M1.8,3.8 H8 M1.8,5.2 H6" stroke="#030317" stroke-width="0.5"/><circle cx="7.8" cy="7.8" r="2.7" fill="#030317" stroke="#e6e6e6" stroke-width="0.7"/><path d="M7.8,6.5 V9.2" stroke="#e6e6e6" stroke-width="0.7"/></svg>
</body></html>
